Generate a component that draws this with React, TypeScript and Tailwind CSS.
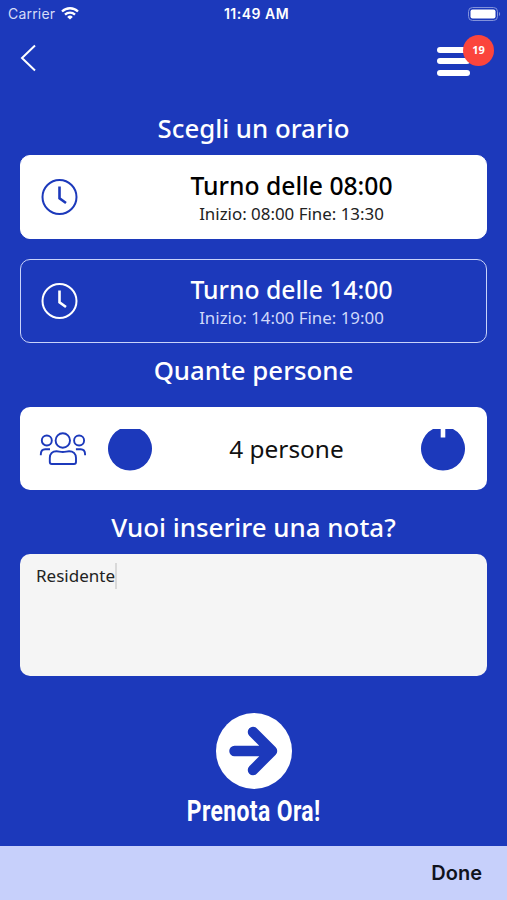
import React, { useState } from 'react';
import clsx from 'clsx';

const shifts = [
  { id: 1, start: '08:00', end: '13:30' },
  { id: 2, start: '14:00', end: '19:00' },
];

function ClockIcon() {
  return (
    <svg width="38" height="38" viewBox="0 0 38 38" fill="none" stroke="currentColor" strokeWidth="2">
      <circle cx="18.5" cy="19" r="17" />
      <path d="M18.5 8.5V20.3L25 25" strokeWidth="2.6" />
    </svg>
  );
}

function PeopleIcon() {
  return (
    <svg width="48" height="36" viewBox="0 0 48 36" fill="none" stroke="currentColor" strokeWidth="1.9">
      <circle cx="23.8" cy="9.5" r="7.2" />
      <circle cx="7.8" cy="9.5" r="5" />
      <circle cx="40.1" cy="9.5" r="5" />
      <path d="M1.8 24.3V23.5c0-3 1.7-5.2 4.5-5.2h4.7M46.1 24.3V23.5c0-3-1.7-5.2-4.5-5.2h-4.7" />
      <path d="M10.8 31V27c0-4.2 2.7-6.8 6.7-6.8 2.3 0 3.5.8 6.3.8s4-.8 6.3-.8c4 0 6.9 2.6 6.9 6.8v4c0 1.4-.7 2-2 2H12.8c-1.3 0-2-.6-2-2Z" />
    </svg>
  );
}

function StatusBar() {
  return (
    <div className="grid h-[27px] grid-cols-3 items-center pl-2 pr-1.5 font-['Inter'] text-[14px] text-white">
      <div className="flex items-center gap-[6px]">
        <span className="tracking-[0.2px] text-[#d5dcf7]">Carrier</span>
        <svg width="18" height="13" viewBox="0 0 18 13" fill="none" stroke="white" strokeWidth="2.3">
          <path d="M1 4.5a11.5 11.5 0 0 1 16 0M4 7.7a7.2 7.2 0 0 1 10 0" />
          <path d="M9 12.6 6.2 9.9a4 4 0 0 1 5.6 0Z" fill="white" stroke="none" />
        </svg>
      </div>
      <span className="whitespace-nowrap pl-1 text-center text-[14px] font-semibold tracking-[0.5px]">11:49 AM</span>
      <svg className="justify-self-end" width="33" height="14" viewBox="0 0 33 14">
        <rect x="0.5" y="0.5" width="29" height="13" rx="4" fill="none" stroke="#8292db" />
        <rect x="2.5" y="2.5" width="25" height="9" rx="2" fill="white" />
        <path d="M31 5v4c1.5-.6 1.5-3.4 0-4Z" fill="#8292db" />
      </svg>
    </div>
  );
}

export default function BookingPage() {
  const [selected, setSelected] = useState(1);
  const [people, setPeople] = useState(4);
  const [note] = useState('Residente');

  return (
    <div className="flex h-[900px] w-[507px] flex-col overflow-hidden bg-[#1c39bb] font-['Noto_Sans',sans-serif]">
      <StatusBar />

      <div className="flex h-[79px] items-start justify-between pl-5 pr-[13px] pt-2">
        <button className="pt-[9px]">
          <svg width="17" height="28" viewBox="0 0 17 28" fill="none" stroke="white" strokeWidth="2">
            <path d="M15 1.5 2 14 15 26.5" />
          </svg>
        </button>
        <button className="relative h-[42px] w-[57px]">
          <div className="flex w-[33px] flex-col gap-[5.5px] pt-[10px]">
            <span className="h-[6px] rounded-sm bg-white" />
            <span className="h-[6px] rounded-sm bg-white" />
            <span className="h-[6px] rounded-sm bg-white" />
          </div>
          <span className="absolute right-0 top-0 flex h-[31px] w-[31px] items-center justify-center rounded-full bg-[#fb453c] font-['Open_Sans'] text-[11px] font-bold text-white">
            19
          </span>
        </button>
      </div>

      <div className="flex flex-col px-5">
        <h2 className="h-[49px] pt-1 text-center text-[25.8px] font-medium leading-9 text-white">Scegli un orario</h2>

        <div className="flex flex-col gap-5">
          {shifts.map((s) => (
            <button
              key={s.id}
              onClick={() => setSelected(s.id)}
              className={clsx(
                'flex h-[84px] items-center rounded-[10px] border pl-5',
                selected === s.id ? 'border-white bg-white text-black' : 'border-[#c9d3fa] text-white'
              )}
            >
              <span className={selected === s.id ? 'text-[#1c39bb]' : 'text-white'}>
                <ClockIcon />
              </span>
              <div className="flex flex-1 flex-col pl-[18px] pt-0.5">
                <span className="text-[24.7px] font-medium leading-8">Turno delle {s.start}</span>
                <span className={clsx('text-[16.9px] leading-6', selected === s.id ? 'text-[#222]' : 'text-[#cfd8fa]')}>
                  Inizio: {s.start} Fine: {s.end}
                </span>
              </div>
            </button>
          ))}
        </div>

        <h2 className="h-16 pt-[9px] text-center text-[25.8px] font-medium leading-9 text-white">Quante persone</h2>

        <div className="flex h-[83px] items-center rounded-[10px] bg-white pl-[19px] pr-[21px] text-[#1c39bb]">
          <PeopleIcon />
          <button className="ml-5" onClick={() => setPeople(Math.max(1, people - 1))}>
            <svg width="46" height="44" viewBox="0 0 46 44" fill="currentColor">
              <path d="M13 2H33A22 22 0 1 1 13 2Z" />
            </svg>
          </button>
          <span className="flex-1 pt-0.5 text-center text-[24.4px] text-[#111]">{people} persone</span>
          <button onClick={() => setPeople(people + 1)}>
            <svg width="46" height="44" viewBox="0 0 46 44" fill="currentColor">
              <path d="M13 2H20.7V10.5H25.3V2H33A22 22 0 1 1 13 2Z" />
            </svg>
          </button>
        </div>

        <h2 className="h-16 pt-[19px] text-center text-[25.9px] font-medium leading-9 text-white">Vuoi inserire una nota?</h2>

        <div className="flex h-[122px] rounded-[10px] bg-[#f5f5f5] px-4 py-[9px]">
          <span className="text-[17px] leading-[26px] text-[#222]">{note}</span>
          <span className="h-[26px] w-[2px] bg-[#d9d9d9]" />
        </div>
      </div>

      <button className="mt-[37px] flex flex-col items-center self-center pl-px text-white">
        <svg width="76" height="76" viewBox="0 0 76 76">
          <circle cx="38" cy="38" r="38" fill="white" />
          <path d="M18.5 38H55M37 19 56 38 37 57" fill="none" stroke="#1c39bb" strokeWidth="10.5" strokeLinecap="round" strokeLinejoin="round" />
        </svg>
        <span className="mt-1 origin-center scale-x-[0.79] whitespace-nowrap font-['Roboto'] text-[29px] font-bold leading-9 tracking-[0.5px]">Prenota Ora!</span>
      </button>

      <div className="mt-auto flex h-[54px] items-center justify-end bg-[#c7d0fb] pr-[25px] font-['Inter'] text-[20px] font-semibold text-[#10131c]">
        Done
      </div>
    </div>
  );
}
